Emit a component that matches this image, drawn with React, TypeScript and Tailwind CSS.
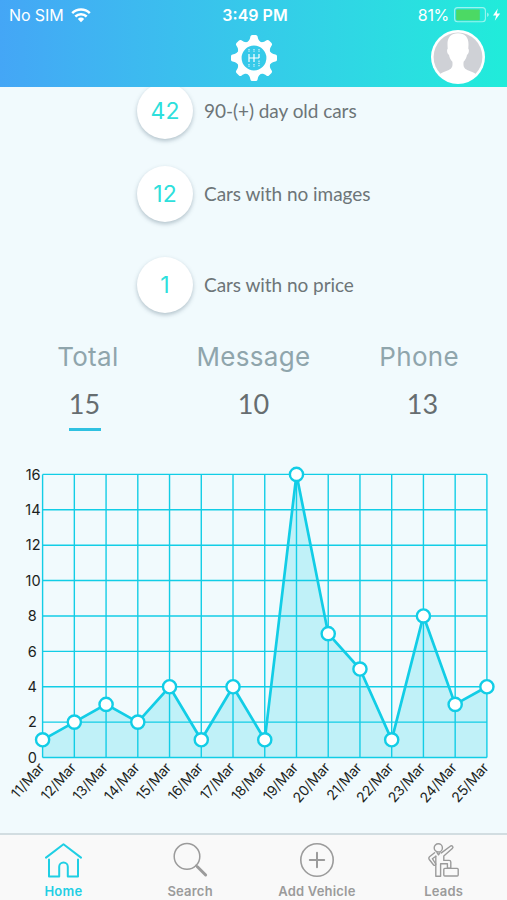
import type { ReactNode } from "react";
import clsx from "clsx";

// ── Data ───────────────────────────────────────────────

const stockAlerts = [
  { count: 42, label: "90-(+) day old cars", row: "mb-[27px]" },
  { count: 12, label: "Cars with no images", row: "mb-[35px]" },
  { count: 1, label: "Cars with no price", row: "" },
];

const leadTotals = [
  { label: "Total", value: 15, active: true },
  { label: "Message", value: 10, active: false },
  { label: "Phone", value: 13, active: false },
];

const leadsPerDay = [
  { day: "11/Mar", leads: 1 },
  { day: "12/Mar", leads: 2 },
  { day: "13/Mar", leads: 3 },
  { day: "14/Mar", leads: 2 },
  { day: "15/Mar", leads: 4 },
  { day: "16/Mar", leads: 1 },
  { day: "17/Mar", leads: 4 },
  { day: "18/Mar", leads: 1 },
  { day: "19/Mar", leads: 16 },
  { day: "20/Mar", leads: 7 },
  { day: "21/Mar", leads: 5 },
  { day: "22/Mar", leads: 1 },
  { day: "23/Mar", leads: 8 },
  { day: "24/Mar", leads: 3 },
  { day: "25/Mar", leads: 4 },
];

// ── Icons ──────────────────────────────────────────────

function WifiIcon() {
  return (
    <svg width="20" height="15" viewBox="0 0 20 15" fill="none" stroke="white" strokeWidth="2.5">
      <path d="M1.2 5.2a12.6 12.6 0 0 1 17.600 0" />
      <path d="M4.300 8.500a8.200 8.200 0 0 1 11.400 0" />
      <path d="M6.800 10.900a4.600 4.600 0 0 1 6.400 0L10 14.200z" fill="white" stroke="none" />
    </svg>
  );
}

function BatteryIcon() {
  return (
    <svg width="47" height="16" viewBox="0 0 47 16">
      <rect x="0.6" y="0.6" width="30.8" height="14.2" rx="3" fill="none" stroke="white" strokeOpacity="0.55" strokeWidth="1.1" />
      <rect x="2.2" y="2.4" width="23.6" height="10.8" rx="0.8" fill="#4cd964" />
      <path d="M33.200 5.400c2 1 2 3.600 0 4.600z" fill="white" fillOpacity="0.6" />
      <path d="M43.800 1.600 39 8.400h3.200l-1.400 5.400 5.400-7.200h-3.400z" fill="white" />
    </svg>
  );
}

function GearIcon() {
  return (
    <svg width="48" height="48" viewBox="-24 -24 48 48">
      {[0, 45, 90, 135, 180, 225, 270, 315].map((angle) => (
        <path
          key={angle}
          transform={`rotate(${angle})`}
          d="M-7.2-15.5C-5-17-4-18.5-3.6-21.4Q-3.300-23-1.800-23H1.800Q3.300-23 3.600-21.400C4-18.500 5-17 7.200-15.500z"
          fill="white"
        />
      ))}
      <circle r="14.8" fill="none" stroke="white" strokeWidth="4.800" />
      <g fill="none" stroke="white" strokeWidth="1.2">
        <path d="M-5-4v8M0-4v8M5-4v4M-5 0H5" />
        <path d="M-5-9v3M0-9v3M5-9v3M-5 6v3M0 6v3M5 2.500v6.500" strokeDasharray="1.4 0.8" strokeWidth="1.600" strokeOpacity="0.6" />
      </g>
    </svg>
  );
}

function Avatar() {
  return (
    <svg width="54" height="54" viewBox="0 0 54 54">
      <circle cx="27" cy="27" r="27" fill="white" />
      <circle cx="27" cy="27" r="24.4" fill="#cfd1d6" />
      <path
        d="M27 3.200c-7.200 0-10.700 4.400-10.500 11.200l.2 4.300c-1.300.8-.4 5.700 1.300 6.100.4 3 1.500 5 3.400 6.900.5 4.500-.3 6.600-3.600 8.200-4.600 2.100-7.400 2.600-9 4.400A27 27 0 0 0 27 52.500a27 27 0 0 0 18.200-8.200c-1.600-1.800-4.400-2.300-9-4.400-3.300-1.600-4.100-3.700-3.600-8.200 1.900-1.900 3-3.900 3.400-6.900 1.700-.4 2.600-5.300 1.300-6.100l.2-4.300C37.700 7.600 34.200 3.200 27 3.200z"
        fill="white"
      />
    </svg>
  );
}

function HomeIcon() {
  return (
    <svg width="38" height="36" viewBox="0 0 38 36" fill="none" stroke="currentColor" strokeWidth="2" strokeLinecap="round" strokeLinejoin="round">
      <path d="M2 15.600 19.500 2.200 37 15.600" />
      <path d="M5 17.600v16.800h10.200v-9.600a4.300 4.300 0 0 1 8.600 0v9.600H34V17.600" />
    </svg>
  );
}

function SearchIcon() {
  return (
    <svg width="36" height="36" viewBox="0 0 36 36" fill="none" stroke="currentColor" strokeLinecap="round">
      <circle cx="15" cy="14.400" r="12.800" strokeWidth="1.500" />
      <path d="M24 23.400l1.400 1.400" strokeWidth="1.800" />
      <path d="M25.400 24.800l8.200 8.200" strokeWidth="3" />
    </svg>
  );
}

function AddIcon() {
  return (
    <svg width="36" height="36" viewBox="0 0 36 36" fill="none" stroke="currentColor" strokeLinecap="round">
      <circle cx="18" cy="18" r="16.200" strokeWidth="1.600" />
      <path d="M18 10.800v14.400M10.800 18h14.400" strokeWidth="2" />
    </svg>
  );
}

function LeadsIcon() {
  return (
    <svg width="32" height="36" viewBox="0 0 32 36" fill="none" stroke="currentColor" strokeWidth="1.4" strokeLinejoin="round" strokeLinecap="round">
      <circle cx="10.3" cy="5.900" r="4.100" />
      <path d="M6.600 10.800 1.500 14.800c-.8.8-.8 1.800-.2 2.700l4.300 5.500c1.200 1 2.600-.3 1.800-1.500l-3-4.800 3.400-2.500" />
      <path d="M13.400 10.900 22.300 4.200c1.900-1.200 3.600.9 2 2.300L15.800 14v4.400h5.300c1.200 0 1.700.6 1.700 1.700v6.100h-3.400v-4.400h-6.800v12.400H7.800V14.200" />
      <path d="M9 10.600l1.500 2.200 1.500-2.200" />
      <rect x="15.800" y="26.400" width="14.400" height="7.600" rx="1" />
    </svg>
  );
}

// ── Leads chart ────────────────────────────────────────

const LEFT = 42.6;
const RIGHT = 486.9;
const TOP = 19.4;
const BOTTOM = 302.5;
const MAX_LEADS = 16;

function LeadsChart() {
  const step = (RIGHT - LEFT) / (leadsPerDay.length - 1);
  const x = (i: number) => LEFT + i * step;
  const y = (leads: number) => BOTTOM - (leads / MAX_LEADS) * (BOTTOM - TOP);
  const ticks = [0, 2, 4, 6, 8, 10, 12, 14, 16];
  const points = leadsPerDay.map((d, i) => `${x(i)},${y(d.leads)}`).join(" ");

  return (
    <svg width="507" height="365" viewBox="0 0 507 365" className="block">
      <polygon points={`${LEFT},${BOTTOM} ${points} ${RIGHT},${BOTTOM}`} fill="#14d2ea" fillOpacity="0.22" />

      <g stroke="#12cde6" strokeWidth="1.4">
        {ticks.map((t) => (
          <line key={t} x1={LEFT} x2={RIGHT} y1={y(t)} y2={y(t)} />
        ))}
        {leadsPerDay.map((d, i) => (
          <line key={d.day} x1={x(i)} x2={x(i)} y1={TOP} y2={BOTTOM} />
        ))}
      </g>

      <polyline points={points} fill="none" stroke="#12cde6" strokeWidth="2.7" />
      {leadsPerDay.map((d, i) => (
        <circle key={d.day} cx={x(i)} cy={y(d.leads)} r="6.6" fill="white" stroke="#12cde6" strokeWidth="2.4" />
      ))}

      <g className="fill-[#1c1f21] font-['Inter'] text-[14px]">
        {ticks.map((t) => (
          <text key={t} x={t < 10 ? 36.8 : 40.6} y={y(t) + 5.3} textAnchor="end" className="text-[14.5px]">
            {t}
          </text>
        ))}
        {leadsPerDay.map((d, i) => (
          <text
            key={d.day}
            transform={`translate(${x(i) + 2.5} ${BOTTOM + 10.5}) rotate(-48.5)`}
            textAnchor="end"
            className="tracking-[-0.1px]"
          >
            {d.day}
          </text>
        ))}
      </g>
    </svg>
  );
}

// ── Tab bar ────────────────────────────────────────────

function Tab({ label, icon, active }: { label: string; icon: ReactNode; active?: boolean }) {
  return (
    <button
      className={clsx(
        "flex flex-col items-center pt-[7px] text-[13px] leading-[18px] font-semibold tracking-[0.2px]",
        active ? "text-[#1fcfe4]" : "text-[#9b9b9b]",
      )}
    >
      {icon}
      <span className="mt-[4px] whitespace-nowrap">{label}</span>
    </button>
  );
}

export default function App() {
  return (
    <div className="flex h-[900px] w-[507px] flex-col overflow-hidden bg-[#f1fafd] font-['Inter',sans-serif]">
      <header className="h-[87px] shrink-0 bg-linear-to-r from-[#44a6f6] to-[#20ecda] text-white">
        <div className="grid h-[30px] grid-cols-3 items-center pr-[6px] pl-[9px] text-[16px] leading-[30px]">
          <div className="flex items-center gap-[7px]">
            <span className="tracking-[-0.1px]">No SIM</span>
            <WifiIcon />
          </div>
          <span className="text-center font-semibold">3:49 PM</span>
          <div className="flex items-center justify-end gap-[5px]">
            <span className="tracking-[-0.3px]">81%</span>
            <BatteryIcon />
          </div>
        </div>
        <div className="grid grid-cols-3 items-center">
          <div />
          <div className="flex justify-center pt-[2px]">
            <GearIcon />
          </div>
          <div className="flex justify-end pr-[22px]">
            <Avatar />
          </div>
        </div>
      </header>

      <main className="flex-1 overflow-hidden">
        <ul className="-mt-[4px] pl-[137px]">
          {stockAlerts.map((alert) => (
            <li key={alert.label} className={clsx("flex items-center gap-[11px]", alert.row)}>
              <span className="flex size-[56px] items-center justify-center rounded-full bg-white text-[23px] text-[#2edfdc] shadow-[0_2px_4px_rgba(60,90,110,0.35)]">
                {alert.count}
              </span>
              <span className="pt-px font-['Lato'] text-[19px] tracking-[-0.05px] text-[#6d7578]">{alert.label}</span>
            </li>
          ))}
        </ul>

        <div className="mt-[26px] grid grid-cols-3 px-[5px] text-center text-[26px] leading-[36px] tracking-[0.3px] text-[#8fa5ac]">
          {leadTotals.map((total) => (
            <span key={total.label}>{total.label}</span>
          ))}
        </div>
        <div className="mt-[11px] grid grid-cols-3 font-['Lato'] text-[27px] leading-[36px] text-[#666d70]">
          {leadTotals.map((total) => (
            <div key={total.label} className="flex flex-col items-center">
              <span>{total.value}</span>
              <span className={clsx("mt-[6px] h-[3px] w-[32px]", total.active && "bg-[#2fc1e1]")} />
            </div>
          ))}
        </div>

        <div className="mt-[24px]">
          <LeadsChart />
        </div>
      </main>

      <nav className="grid h-[67px] shrink-0 grid-cols-4 border-t-2 border-[#d2dde1] bg-[#f9f9f9]">
        <Tab label="Home" icon={<HomeIcon />} active />
        <Tab label="Search" icon={<SearchIcon />} />
        <Tab label="Add Vehicle" icon={<AddIcon />} />
        <Tab label="Leads" icon={<LeadsIcon />} />
      </nav>
    </div>
  );
}
